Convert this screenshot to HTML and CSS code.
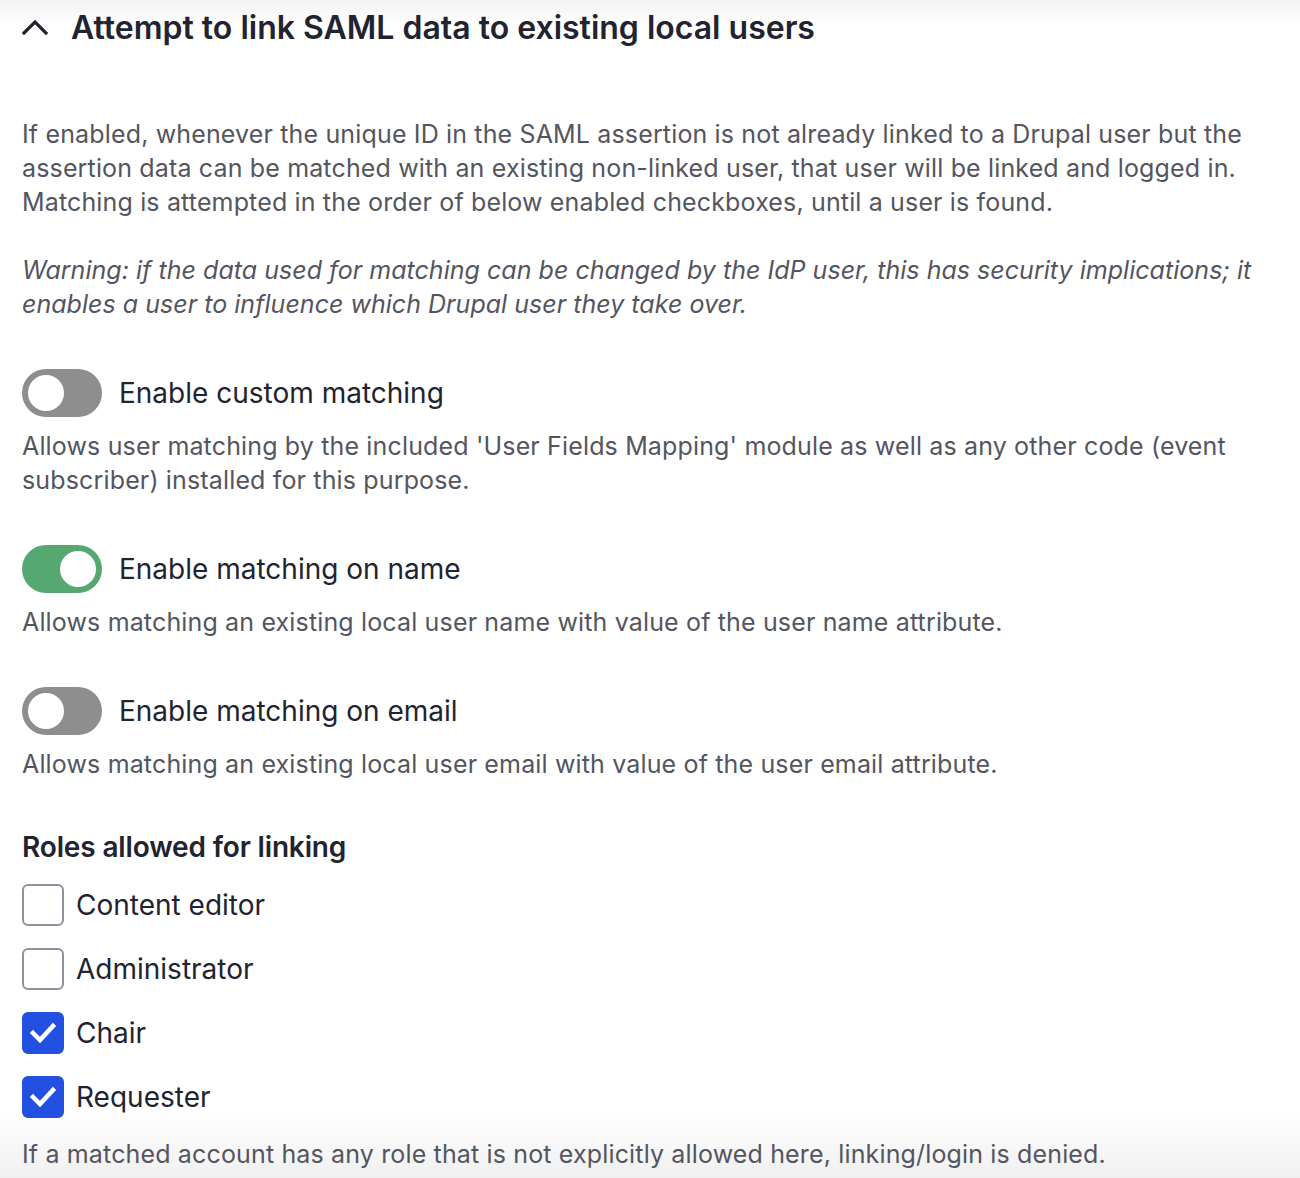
FILE: index.html
```html
<!DOCTYPE html>
<html lang="en">
<head>
<meta charset="utf-8">
<title>SAML linking</title>
<link rel="stylesheet" href="styles.css">
</head>
<body>
<div class="page">
  <div class="summary">
    <svg class="chevron" width="26" height="16" viewBox="0 0 26 16"><path d="M2 14 L13 3 L24 14" fill="none" stroke="#222330" stroke-width="3.2" stroke-linecap="square"/></svg>
    <h2 class="title">Attempt to link SAML data to existing local users</h2>
  </div>
  <div class="body">
    <p class="desc">If enabled, whenever the unique ID in the SAML assertion is not already linked to a Drupal user but the assertion data can be matched with an existing non-linked user, that user will be linked and logged in. Matching is attempted in the order of below enabled checkboxes, until a user is found.</p>
    <p class="desc warn"><em>Warning: if the data used for matching can be changed by the IdP user, this has security implications; it enables a user to influence which Drupal user they take over.</em></p>

    <div class="toggle-item">
      <div class="toggle-row">
        <span class="toggle"><span class="knob"></span></span>
        <span class="toggle-label">Enable custom matching</span>
      </div>
      <p class="desc item-desc">Allows user matching by the included 'User Fields Mapping' module as well as any other code (event subscriber) installed for this purpose.</p>
    </div>

    <div class="toggle-item">
      <div class="toggle-row">
        <span class="toggle on"><span class="knob"></span></span>
        <span class="toggle-label">Enable matching on name</span>
      </div>
      <p class="desc item-desc">Allows matching an existing local user name with value of the user name attribute.</p>
    </div>

    <div class="toggle-item">
      <div class="toggle-row">
        <span class="toggle"><span class="knob"></span></span>
        <span class="toggle-label">Enable matching on email</span>
      </div>
      <p class="desc item-desc">Allows matching an existing local user email with value of the user email attribute.</p>
    </div>

    <div class="roles">
      <h3 class="roles-title">Roles allowed for linking</h3>
      <div class="checks">
        <div class="check-row"><span class="box"></span><span class="check-label">Content editor</span></div>
        <div class="check-row"><span class="box"></span><span class="check-label">Administrator</span></div>
        <div class="check-row"><span class="box checked"><svg width="28" height="24" viewBox="0 0 28 24"><path d="M4 12 L11 19 L24 5" fill="none" stroke="#fff" stroke-width="4.5" stroke-linecap="square"/></svg></span><span class="check-label">Chair</span></div>
        <div class="check-row"><span class="box checked"><svg width="28" height="24" viewBox="0 0 28 24"><path d="M4 12 L11 19 L24 5" fill="none" stroke="#fff" stroke-width="4.5" stroke-linecap="square"/></svg></span><span class="check-label">Requester</span></div>
      </div>
      <p class="desc roles-desc">If a matched account has any role that is not explicitly allowed here, linking/login is denied.</p>
    </div>
  </div>
</div>
</body>
</html>
```

FILE: styles.css
```css
html, body {
  margin: 0;
  padding: 0;
  background: #fff;
}
body {
  font-family: Inter, "Noto Sans", sans-serif;
  color: #222330;
  width: 1300px;
  height: 1178px;
  overflow: hidden;
  background:
    linear-gradient(to bottom, #f3f3f4 0px, #ffffff 26px, #ffffff 1112px, #f0f0f1 1178px);
}
.page {
  padding: 0 22px;
}
.summary {
  display: flex;
  align-items: center;
  gap: 23px;
  height: 54px;
}
.chevron {
  display: block;
}
.title {
  margin: 0;
  font-size: 32px;
  font-weight: 600;
  color: #222330;
}
.body {
  padding-top: 63px;
}
.desc {
  margin: 0;
  font-size: 25px;
  letter-spacing: 0.15px;
  line-height: 34px;
  color: #545560;
}
.warn {
  margin-top: 34px;
}
.warn em {
  letter-spacing: 0.03px;
}
.toggle-item {
  margin-top: 48px;
}
.toggle-row {
  display: flex;
  align-items: center;
  gap: 17px;
  height: 48px;
}
.toggle {
  box-sizing: border-box;
  width: 80px;
  height: 48px;
  border-radius: 24px;
  background: #8e8e8e;
  padding: 6px;
  display: flex;
  justify-content: flex-start;
}
.toggle.on {
  background: #55a86f;
  justify-content: flex-end;
}
.knob {
  width: 36px;
  height: 36px;
  border-radius: 50%;
  background: #fff;
}
.toggle-label {
  font-size: 28px;
  color: #222330;
}
.item-desc {
  margin-top: 12px;
}
.roles {
  margin-top: 49px;
}
.roles-title {
  margin: 0;
  font-size: 28px;
  font-weight: 600;
  letter-spacing: -0.15px;
  line-height: 34px;
  color: #222330;
}
.checks {
  display: flex;
  flex-direction: column;
  gap: 22px;
  margin-top: 20px;
}
.check-row {
  display: flex;
  align-items: center;
  gap: 12px;
  height: 42px;
}
.box {
  box-sizing: border-box;
  width: 42px;
  height: 42px;
  border: 2px solid #8e929c;
  border-radius: 6px;
  background: #fff;
  display: flex;
  align-items: center;
  justify-content: center;
}
.box.checked {
  background: #2250e0;
  border-color: #2250e0;
}
.check-label {
  font-size: 28px;
  color: #222330;
}
.roles-desc {
  margin-top: 19px;
}
```
